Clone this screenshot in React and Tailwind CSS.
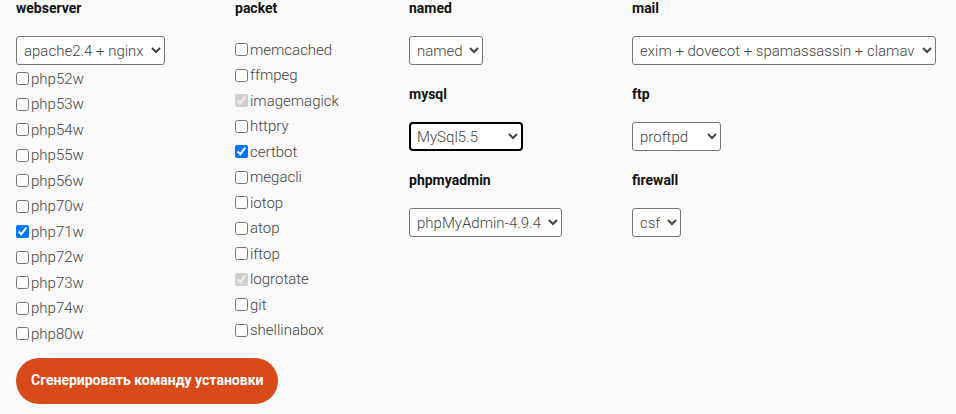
import React from "react";

const php = ["php52w","php53w","php54w","php55w","php56w","php70w","php71w","php72w","php73w","php74w","php80w"];
const packets = [
  ["memcached", false, false],
  ["ffmpeg", false, false],
  ["imagemagick", true, true],
  ["httpry", false, false],
  ["certbot", true, false],
  ["megacli", false, false],
  ["iotop", false, false],
  ["atop", false, false],
  ["iftop", false, false],
  ["logrotate", true, true],
  ["git", false, false],
  ["shellinabox", false, false],
];

function Heading({ children }) {
  return <div className="h-[16px] leading-[16px] mb-[20px] text-[14px] font-bold text-[#111]">{children}</div>;
}

function Check({ label, checked, disabled }) {
  return (
    <label className="flex items-center h-[25.5px] text-[15px] font-light text-[#444]">
      <input type="checkbox" defaultChecked={checked} disabled={disabled} className="m-0 w-[13px] h-[13px]" />
      <span className="ml-[2px]">{label}</span>
    </label>
  );
}

function Sel({ value, w, focus }) {
  return (
    <select
      defaultValue={value}
      className={
        "block h-[29px] bg-white text-[15px] font-light text-[#444] rounded-[3px] " +
        w + " " +
        (focus ? "border-2 border-black rounded-[4px] pl-[2px]" : "border border-[#767676] pl-[3px]")
      }
    >
      <option>{value}</option>
    </select>
  );
}

export default function App() {
  return (
    <div className="w-[956px] h-[414px] bg-[#f9f9f9] font-['Roboto',sans-serif] px-4 overflow-hidden">
      <div className="flex">
        <div className="w-[219px] shrink-0">
          <Heading>webserver</Heading>
          <Sel value="apache2.4 + nginx" w="w-[149px]" />
          <div className="pt-[1px]">
            {php.map((p) => (
              <Check key={p} label={p} checked={p === "php71w"} />
            ))}
          </div>
        </div>
        <div className="w-[174px] shrink-0">
          <Heading>packet</Heading>
          <div className="pt-[1px]">
            {packets.map(([l, c, d]) => (
              <Check key={l} label={l} checked={c} disabled={d} />
            ))}
          </div>
        </div>
        <div className="w-[223px] shrink-0">
          <Heading>named</Heading>
          <Sel value="named" w="w-[74px]" />
          <div className="h-[21px]" />
          <Heading>mysql</Heading>
          <Sel value="MySql5.5" w="w-[114px]" focus />
          <div className="h-[21px]" />
          <Heading>phpmyadmin</Heading>
          <Sel value="phpMyAdmin-4.9.4" w="w-[153px]" />
        </div>
        <div className="flex-1">
          <Heading>mail</Heading>
          <Sel value="exim + dovecot + spamassassin + clamav" w="w-[304px]" />
          <div className="h-[21px]" />
          <Heading>ftp</Heading>
          <Sel value="proftpd" w="w-[89px]" />
          <div className="h-[21px]" />
          <Heading>firewall</Heading>
          <Sel value="csf" w="w-[49px]" />
        </div>
      </div>
      <button className="mt-[11px] h-[46px] px-[15px] rounded-full bg-[#d84a19] text-white text-[14px] font-bold">
        Сгенерировать команду установки
      </button>
    </div>
  );
}
